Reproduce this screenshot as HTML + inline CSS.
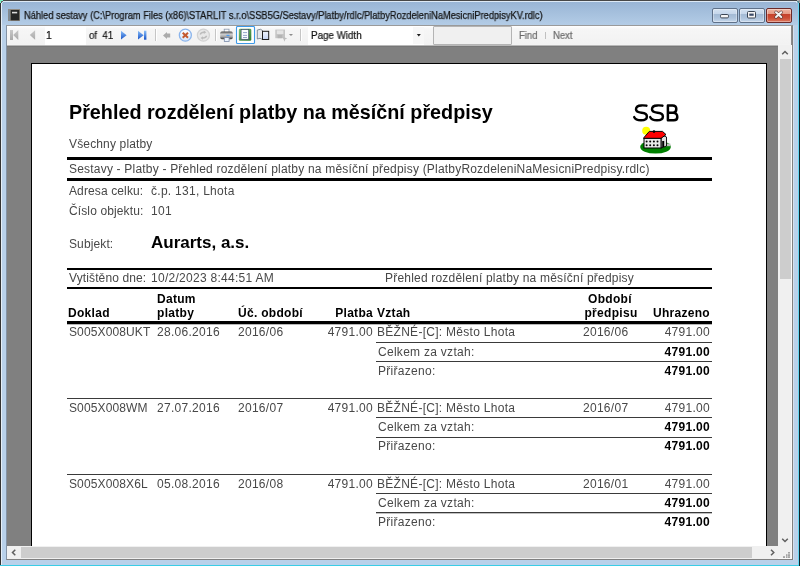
<!DOCTYPE html>
<html><head><meta charset="utf-8">
<style>
*{margin:0;padding:0;box-sizing:border-box}
html,body{width:800px;height:566px;overflow:hidden;background:#b9d1ea;font-family:"Liberation Sans",sans-serif;position:relative}
.a{position:absolute}
#title{left:2px;top:2px;width:796px;height:23px;background:linear-gradient(#99b5d5,#b3cce6)}
.ttl{left:23.5px;top:9.4px;-webkit-text-stroke:0.25px #141414;will-change:transform;font-size:10px;line-height:13px;color:#141414;white-space:pre;transform-origin:0 0;transform:scaleX(0.928)}
.wb{top:8px;width:26px;height:15px;border:1px solid #5f7189;border-radius:2px;box-shadow:inset 0 0 0 1px rgba(255,255,255,0.35);background:linear-gradient(#d4e2f1 0px,#c5d6ea 5px,#a2b9d4 5px,#adc3dc 9px,#c6d8ec 13px)}
#content{left:6px;top:25px;width:787px;height:535px;border:1px solid #808080;border-top-color:#9a9a9a;border-left-color:#8493a6;background:#808080}
#toolbar{left:7px;top:26px;width:785px;height:19px;background:linear-gradient(#ffffff 0px,#f6f6f6 3px,#f2f2f2 18px,#f4f4f4 19px)}
.tb{position:absolute;will-change:transform;-webkit-text-stroke:0.2px currentColor;font-size:10px;line-height:13px;color:#111;white-space:pre;transform-origin:0 0}
.sep{position:absolute;width:1px;height:12px;top:29px;background:#c5c5c5;box-shadow:1px 0 0 #fff}
#page{left:31px;top:63px;width:736px;height:483px;background:#fff;border:1px solid #000;border-bottom:none}
.t{position:absolute;will-change:transform;white-space:pre;font-size:12px;color:#484848;line-height:14px;letter-spacing:0.28px}
.b{font-weight:bold;color:#000;letter-spacing:0.3px}
.hl{position:absolute;background:#000}
</style></head><body>
<!-- frame edges -->
<div class="a" id="title"></div>
<div class="a" style="left:0;top:0;width:800px;height:1px;background:#474747"></div>
<div class="a" style="left:0;top:0;width:1px;height:566px;background:#333333"></div>
<div class="a" style="left:799px;top:0;width:1px;height:566px;background:#10242b"></div>
<div class="a" style="left:798px;top:1px;width:1px;height:565px;background:#66d6f2"></div>
<div class="a" style="left:0;top:565px;width:799px;height:1px;background:#3acde6"></div>
<div class="a" style="left:1px;top:1px;width:1px;height:564px;background:#e6eff8"></div>
<div class="a" style="left:1px;top:1px;width:797px;height:1px;background:#dde9f5"></div>
<div class="a" style="left:0;top:0;width:3px;height:1px;background:#78f2c8"></div>
<div class="a" style="left:0;top:0;width:1px;height:3px;background:#78f2c8"></div>
<div class="a" style="left:1px;top:1px;width:2px;height:1px;background:#6a6a6a"></div>
<div class="a" style="left:1px;top:1px;width:1px;height:2px;background:#6a6a6a"></div>
<div class="a" style="left:2px;top:2px;width:1px;height:1px;background:#d0e0f0"></div>
<div class="a" style="left:797px;top:0;width:3px;height:1px;background:#b4b4b4"></div>
<div class="a" style="left:799px;top:0;width:1px;height:3px;background:#9a9a9a"></div>
<div class="a" style="left:797px;top:1px;width:2px;height:1px;background:#5a8a90"></div>
<div class="a" style="left:798px;top:1px;width:1px;height:2px;background:#5a8a90"></div>
<div class="a" style="left:796px;top:2px;width:1px;height:1px;background:#d0e0f0"></div>

<!-- title icon -->
<svg class="a" style="left:8px;top:9px" width="12" height="12" viewBox="0 0 12 12">
<rect x="0" y="0" width="12" height="12" fill="#8f8a82"/>
<rect x="0.5" y="1" width="1.5" height="10" fill="#7a8a99"/>
<rect x="2.7" y="1" width="8.6" height="10.3" fill="#262626"/>
<rect x="4" y="2.8" width="5.2" height="1.6" fill="#dcdcdc"/>
</svg>
<div class="a ttl">Náhled sestavy (C:\Program Files (x86)\STARLIT s.r.o\SSB5G/Sestavy/Platby/rdlc/PlatbyRozdeleniNaMesicniPredpisyKV.rdlc)</div>

<!-- window buttons -->
<div class="a wb" style="left:712px"></div>
<div class="a wb" style="left:739px"></div>
<div class="a wb" style="left:766px;border-color:#6b2a2a;background:linear-gradient(#f0b4a2 0px,#e59a85 5px,#c5402a 5px,#cc4d34 9px,#dc7a62 13px)"></div>
<svg class="a" style="left:712px;top:8px" width="80" height="15" viewBox="0 0 80 15">
<rect x="8.5" y="6.5" width="8" height="3.4" rx="1.2" fill="#f4f4f4" stroke="#3c4654" stroke-width="1"/>
<rect x="35.5" y="3.5" width="8" height="6.5" rx="1" fill="#f4f4f4" stroke="#3c4654" stroke-width="1"/>
<rect x="37.3" y="5.6" width="4.4" height="2.2" fill="#3a4a68"/>
<path d="M64,4.3 L69.2,9.1 M69.2,4.3 L64,9.1" stroke="#5a3a36" stroke-width="3.4" stroke-linecap="round" opacity="0.85"/>
<path d="M64,4.3 L69.2,9.1 M69.2,4.3 L64,9.1" stroke="#f4f4f4" stroke-width="2" stroke-linecap="round"/>
</svg>

<div class="a" id="content"></div>
<div class="a" id="toolbar"></div>

<!-- toolbar content -->
<div class="a" style="left:45px;top:26px;width:41px;height:19px;background:#fff"></div>
<div class="a" style="left:308px;top:26px;width:116px;height:19px;background:#fff"></div>
<div class="a" style="left:413px;top:27px;width:11px;height:17px;background:#f7f7f7"></div>
<div class="a" style="left:433px;top:26px;width:79px;height:19px;background:#f0f0f0;border:1px solid #b4b4b4;border-radius:1px"></div>
<svg class="a" style="left:0;top:26px" width="800" height="19" viewBox="0 26 800 19">
<defs>
<linearGradient id="gg" x1="0" y1="0" x2="0" y2="1"><stop offset="0" stop-color="#c9c9c9"/><stop offset="1" stop-color="#a9a9a9"/></linearGradient>
<linearGradient id="bg" x1="0" y1="0" x2="0" y2="1"><stop offset="0" stop-color="#8cc0f8"/><stop offset="1" stop-color="#1652c8"/></linearGradient>
<linearGradient id="pg" x1="0" y1="0" x2="0" y2="1"><stop offset="0" stop-color="#c8c8c8"/><stop offset="0.5" stop-color="#9a9a9a"/><stop offset="1" stop-color="#6a6a6a"/></linearGradient>
</defs>
<!-- first -->
<rect x="10" y="30" width="3" height="10" fill="url(#gg)"/>
<polygon points="13.2,35 18.3,30 18.3,40" fill="url(#gg)"/>
<!-- prev -->
<polygon points="29.8,35 35.1,30.2 35.1,39.8" fill="url(#gg)"/>
<!-- next -->
<polygon points="121,30.7 126.6,35.2 121,39.6" fill="url(#bg)"/>
<!-- last -->
<polygon points="138,30.7 143.6,35.2 138,39.6" fill="url(#bg)"/>
<rect x="144" y="30.7" width="2.4" height="9" fill="url(#bg)"/>
<!-- back arrow -->
<polygon points="163,35.5 167,32 167,33.6 170.2,33.6 170.2,37.4 167,37.4 167,39" fill="#ababab"/>
<!-- stop -->
<defs><linearGradient id="sg" x1="0" y1="0" x2="0" y2="1"><stop offset="0" stop-color="#ffffff"/><stop offset="1" stop-color="#d6e6fa"/></linearGradient>
<linearGradient id="grg" x1="0" y1="0" x2="0" y2="1"><stop offset="0" stop-color="#4a4a4a"/><stop offset="0.35" stop-color="#cfcfcf"/><stop offset="0.65" stop-color="#a8a8a8"/><stop offset="1" stop-color="#3a3a3a"/></linearGradient>
<linearGradient id="grn" x1="0" y1="0" x2="1" y2="1"><stop offset="0" stop-color="#7cc070"/><stop offset="1" stop-color="#2f7a30"/></linearGradient>
<linearGradient id="bk" x1="0" y1="0" x2="0" y2="1"><stop offset="0" stop-color="#f0f4fc"/><stop offset="1" stop-color="#c4d4f4"/></linearGradient></defs>
<circle cx="185.35" cy="35.15" r="6.0" fill="url(#sg)" stroke="#8ab4ec" stroke-width="1.3"/>
<path d="M182.7,32.7 L188,37.7 M188,32.7 L182.7,37.7" stroke="#c4592e" stroke-width="2"/>
<!-- refresh -->
<circle cx="203.4" cy="35.15" r="6.0" fill="#e8e8e8" stroke="#d2d2d2" stroke-width="1.3"/>
<path d="M200.2,34.5 Q201,32 204.5,32.3 M206.6,35.8 Q205.8,38.3 202.3,38" stroke="#bcbcbc" stroke-width="1.4" fill="none"/>
<polygon points="203.8,30.6 206.3,32.3 203.8,34" fill="#bcbcbc"/>
<polygon points="203,36.3 200.5,38 203,39.7" fill="#bcbcbc"/>
<!-- printer -->
<rect x="224.2" y="29.2" width="4.8" height="4" fill="#fafafa" stroke="#8a9ab0" stroke-width="0.8"/>
<rect x="220.2" y="31.6" width="12.6" height="7.6" rx="1.6" fill="url(#grg)"/>
<rect x="226.5" y="34.8" width="3" height="1.3" fill="#4a9cf5"/>
<rect x="224.3" y="37.6" width="4.8" height="3.9" fill="#eaf2fc" stroke="#7a8aa8" stroke-width="0.8"/>
<!-- selected button -->
<rect x="236.5" y="26.5" width="18" height="17" rx="1" fill="#ffffff" stroke="#3d9ae8" stroke-width="1.1"/>
<rect x="238.8" y="28.8" width="12.5" height="11.9" rx="1.2" fill="url(#grn)"/>
<rect x="241.1" y="29.5" width="7.6" height="9.8" fill="#fbfcff" stroke="#3c4a68" stroke-width="0.7"/>
<path d="M243,32.6 H247 M243,35.4 H247 M243,37.5 H247" stroke="#8898c4" stroke-width="0.9"/>
<!-- book -->
<polygon points="257.3,30 260.5,29.3 262.5,30.5 262.5,39.5 260,38.3 257.3,39" fill="#e6e8ec" stroke="#6a7888" stroke-width="0.8"/>
<rect x="262.5" y="31.3" width="6.2" height="8.2" fill="url(#bk)" stroke="#1e1e1e" stroke-width="1"/>
<!-- export -->
<rect x="275.3" y="29.6" width="9.7" height="8.6" fill="#c4c4c4"/>
<rect x="276.8" y="30.4" width="6.6" height="3.6" fill="#e4e4e4"/>
<rect x="277.6" y="35" width="4.6" height="3.2" fill="#b4b4b4"/>
<polygon points="282.5,37 287.3,38.3 285.3,39.3 284.6,41.8" fill="#bdbdbd"/>
<polygon points="288.9,34 293,34 291,36.1" fill="#8c8c8c"/>
<!-- zoom dropdown arrow -->
<polygon points="416.8,34 420.8,34 418.8,36.6" fill="#1e1e1e"/>
</svg>
<div class="sep" style="left:155px"></div>
<div class="sep" style="left:215px"></div>
<div class="sep" style="left:300px"></div>
<div class="sep" style="left:545px;height:7px;top:32px;background:#c0c0c0;box-shadow:none"></div>
<div class="tb" style="left:46px;top:29px;font-size:10.5px">1</div>
<div class="tb" style="left:89px;top:29px;font-size:10.5px;transform:scaleX(0.92)">of  41</div>
<div class="tb" style="left:310.5px;top:29px;transform:scaleX(0.98)">Page Width</div>
<div class="tb" style="left:519px;top:28.5px;color:#6a6a6a;transform:scaleX(0.95)">Find</div>
<div class="tb" style="left:552.5px;top:28.5px;color:#6a6a6a;transform:scaleX(0.95)">Next</div>

<!-- gray page area -->
<div class="a" style="left:7px;top:45px;width:771px;height:1px;background:#b8b8b8"></div>
<div class="a" style="left:7px;top:46px;width:771px;height:500px;background:#808080;border-top:1px solid #767676"></div>
<div class="a" id="page"></div>

<div class="t b" style="left:69px;top:100px;font-size:19.75px;line-height:24px;letter-spacing:0">Přehled rozdělení platby na měsíční předpisy</div>
<div class="t " style="left:69px;top:137px;letter-spacing:0.15px">Všechny platby</div>
<div class="hl" style="left:67px;top:157px;width:645px;height:3px;background:#000"></div>
<div class="t " style="left:69px;top:162px;letter-spacing:0.2px">Sestavy - Platby - Přehled rozdělení platby na měsíční předpisy (PlatbyRozdeleniNaMesicniPredpisy.rdlc)</div>
<div class="hl" style="left:67px;top:178px;width:645px;height:3px;background:#000"></div>
<div class="t " style="left:69px;top:184px;letter-spacing:0.12px">Adresa celku:</div>
<div class="t " style="left:151px;top:184px;">č.p. 131, Lhota</div>
<div class="t " style="left:69px;top:204px;letter-spacing:0.12px">Číslo objektu:</div>
<div class="t " style="left:151px;top:204px;">101</div>
<div class="t " style="left:69px;top:237px;letter-spacing:0.12px">Subjekt:</div>
<div class="t b" style="left:151px;top:233px;font-size:17px;line-height:20px;letter-spacing:0">Aurarts, a.s.</div>
<div class="hl" style="left:67px;top:268px;width:645px;height:2px;background:#000"></div>
<div class="t " style="left:69px;top:271px;letter-spacing:0.12px">Vytištěno dne:</div>
<div class="t " style="left:151px;top:271px;">10/2/2023 8:44:51 AM</div>
<div class="t " style="left:385px;top:271px;letter-spacing:0.2px">Přehled rozdělení platby na měsíční předpisy</div>
<div class="hl" style="left:67px;top:287px;width:645px;height:2px;background:#000"></div>
<div class="t b" style="left:157px;top:292px;">Datum</div>
<div class="t b" style="left:510px;width:200px;text-align:center;top:292px;">Období</div>
<div class="t b" style="left:68px;top:306px;">Doklad</div>
<div class="t b" style="left:157px;top:306px;">platby</div>
<div class="t b" style="left:238px;top:306px;">Úč. období</div>
<div class="t b" style="left:173.3px;width:200px;text-align:right;top:306px;">Platba</div>
<div class="t b" style="left:377px;top:306px;">Vztah</div>
<div class="t b" style="left:511px;width:200px;text-align:center;top:306px;">předpisu</div>
<div class="t b" style="left:509.8px;width:200px;text-align:right;top:306px;">Uhrazeno</div>
<div class="hl" style="left:67px;top:321px;width:645px;height:3px;background:#000"></div>
<div class="hl" style="left:67px;top:324px;width:645px;height:1px;background:#b8b8b8"></div>
<div class="t " style="left:68.5px;top:325px;letter-spacing:0.12px">S005X008UKT</div>
<div class="t " style="left:157px;top:325px;">28.06.2016</div>
<div class="t " style="left:238px;top:325px;">2016/06</div>
<div class="t " style="left:173.3px;width:200px;text-align:right;top:325px;">4791.00</div>
<div class="t " style="left:376.8px;top:325px;">BĚŽNÉ-[C]: Město Lhota</div>
<div class="t " style="left:582.8px;top:325px;">2016/06</div>
<div class="t " style="left:509.8px;width:200px;text-align:right;top:325px;">4791.00</div>
<div class="hl" style="left:376px;top:342px;width:336px;height:1px;background:#3a3a3a"></div>
<div class="t " style="left:378px;top:345px;">Celkem za vztah:</div>
<div class="t b" style="left:509.8px;width:200px;text-align:right;top:345px;">4791.00</div>
<div class="hl" style="left:376px;top:361px;width:336px;height:1px;background:#3a3a3a"></div>
<div class="t " style="left:378px;top:364px;">Přiřazeno:</div>
<div class="t b" style="left:509.8px;width:200px;text-align:right;top:364px;">4791.00</div>
<div class="hl" style="left:67px;top:398px;width:645px;height:1px;background:#3a3a3a"></div>
<div class="t " style="left:68.5px;top:401px;letter-spacing:0.12px">S005X008WM</div>
<div class="t " style="left:157px;top:401px;">27.07.2016</div>
<div class="t " style="left:238px;top:401px;">2016/07</div>
<div class="t " style="left:173.3px;width:200px;text-align:right;top:401px;">4791.00</div>
<div class="t " style="left:376.8px;top:401px;">BĚŽNÉ-[C]: Město Lhota</div>
<div class="t " style="left:582.8px;top:401px;">2016/07</div>
<div class="t " style="left:509.8px;width:200px;text-align:right;top:401px;">4791.00</div>
<div class="hl" style="left:376px;top:417px;width:336px;height:1px;background:#3a3a3a"></div>
<div class="t " style="left:378px;top:420px;">Celkem za vztah:</div>
<div class="t b" style="left:509.8px;width:200px;text-align:right;top:420px;">4791.00</div>
<div class="hl" style="left:376px;top:437px;width:336px;height:1px;background:#3a3a3a"></div>
<div class="t " style="left:378px;top:439px;">Přiřazeno:</div>
<div class="t b" style="left:509.8px;width:200px;text-align:right;top:439px;">4791.00</div>
<div class="hl" style="left:67px;top:474px;width:645px;height:1px;background:#3a3a3a"></div>
<div class="t " style="left:68.5px;top:477px;letter-spacing:0.12px">S005X008X6L</div>
<div class="t " style="left:157px;top:477px;">05.08.2016</div>
<div class="t " style="left:238px;top:477px;">2016/08</div>
<div class="t " style="left:173.3px;width:200px;text-align:right;top:477px;">4791.00</div>
<div class="t " style="left:376.8px;top:477px;">BĚŽNÉ-[C]: Město Lhota</div>
<div class="t " style="left:582.8px;top:477px;">2016/01</div>
<div class="t " style="left:509.8px;width:200px;text-align:right;top:477px;">4791.00</div>
<div class="hl" style="left:376px;top:493px;width:336px;height:1px;background:#3a3a3a"></div>
<div class="t " style="left:378px;top:496px;">Celkem za vztah:</div>
<div class="t b" style="left:509.8px;width:200px;text-align:right;top:496px;">4791.00</div>
<div class="hl" style="left:376px;top:512px;width:336px;height:1px;background:#3a3a3a"></div>
<div class="t " style="left:378px;top:515px;">Přiřazeno:</div>
<div class="t b" style="left:509.8px;width:200px;text-align:right;top:515px;">4791.00</div>
<div class="hl" style="left:376px;top:513px;width:336px;height:1px;background:#c0c0c0"></div>
<svg class="a" style="left:630px;top:100px" width="52" height="26" viewBox="0 0 52 26">
<g fill="none" stroke="#000" stroke-width="2.45" stroke-linecap="round" stroke-linejoin="round">
<path d="M16.4,5.7 C15.3,5.3 13.5,5.4 11.2,5.4 C7.8,5.4 6,7.2 6,9.3 C6,11.8 8.6,12.4 11.6,12.7 C15,13 16.9,14.2 16.9,16.4 C16.9,19 14.6,20.3 11,20.3 C7.6,20.3 5.2,19.5 4.2,17.1"/>
<path d="M32.4,5.7 C31.3,5.3 29.5,5.4 27.2,5.4 C23.8,5.4 22,7.2 22,9.3 C22,11.8 24.6,12.4 27.6,12.7 C31,13 32.9,14.2 32.9,16.4 C32.9,19 30.6,20.3 27,20.3 C23.6,20.3 21.2,19.5 20.2,17.1"/>
<path d="M37.9,5.4 L37.9,20.3 L43.8,20.3 C46.6,20.3 47.3,18.6 47.3,16.9 C47.3,14.6 45.6,12.8 43.2,12.8 L37.9,12.8 M43.2,12.8 C45.1,12.8 46.3,11.1 46.3,9.1 C46.3,6.9 45.1,5.4 42.6,5.4 L37.9,5.4" stroke-width="2.5"/>
</g></svg>
<svg class="a" style="left:636px;top:124px" width="40" height="32" viewBox="0 0 40 32">
<ellipse cx="19.5" cy="23" rx="15.3" ry="6.6" fill="#008000"/>
<circle cx="10.2" cy="6.8" r="4" fill="#ffff00"/>
<rect x="27.5" y="19.6" width="7" height="2.6" fill="#c0c0c0"/>
<polygon points="25,10.5 30.5,13 30.5,22 25,24" fill="#e0e0e0" stroke="#000" stroke-width="0.9"/>
<rect x="26.2" y="17" width="2" height="6" fill="#000"/>
<polygon points="8,13.5 13.3,7.4 26.5,7.4 30,10.6 25,14.4 7.6,14.4" fill="#ff0000" stroke="#000" stroke-width="1"/>
<circle cx="18" cy="7.6" r="1.3" fill="#000"/>
<rect x="8" y="14.4" width="17" height="9.6" fill="#e8e8e8" stroke="#000" stroke-width="1"/>
<g fill="#000">
<circle cx="10.6" cy="17.4" r="1"/><circle cx="14.2" cy="17.4" r="1"/><circle cx="17.9" cy="17.4" r="1"/><circle cx="21.5" cy="17.4" r="1"/>
<circle cx="10.6" cy="21.2" r="1"/><circle cx="14.2" cy="21.2" r="1"/><circle cx="17.9" cy="21.2" r="1"/><circle cx="21.5" cy="21.2" r="1"/>
</g>
</svg>


<!-- vertical scrollbar -->
<div class="a" style="left:778px;top:45px;width:14px;height:514px;background:#f0f0f0"></div>
<div class="a" style="left:780px;top:59px;width:11px;height:220px;background:#cdcdcd"></div>
<svg class="a" style="left:778px;top:46px" width="14" height="513" viewBox="0 0 14 513">
<path d="M4.2,8.3 L7,5.5 L9.8,8.3" stroke="#606060" stroke-width="1.5" fill="none"/>
<path d="M4.2,492.7 L7,495.5 L9.8,492.7" stroke="#606060" stroke-width="1.5" fill="none"/>
<g fill="#a4a4a4"><rect x="10" y="506" width="2" height="1.6"/><rect x="10" y="508.2" width="2" height="1.8"/><rect x="8" y="508.2" width="1.5" height="1.8"/><rect x="10" y="510.2" width="2" height="1.8"/><rect x="8" y="510.2" width="1.5" height="1.8"/><rect x="5" y="510.2" width="2" height="1.8"/></g>
</svg>
<!-- horizontal scrollbar -->
<div class="a" style="left:791px;top:45px;width:1px;height:514px;background:#fafafa"></div>
<div class="a" style="left:791px;top:26px;width:1px;height:19px;background:#8a8a8a"></div>
<div class="a" style="left:793px;top:26px;width:1px;height:534px;background:#d4e0ee"></div>
<div class="a" style="left:7px;top:558px;width:785px;height:1px;background:#fafafa"></div>
<div class="a" style="left:7px;top:546px;width:771px;height:13px;background:#f0f0f0"></div>
<div class="a" style="left:21px;top:547px;width:731px;height:11px;background:#cdcdcd"></div>
<svg class="a" style="left:7px;top:546px" width="771" height="13" viewBox="0 0 771 13">
<path d="M8.3,3.7 L5.5,6.5 L8.3,9.3" stroke="#606060" stroke-width="1.5" fill="none"/>
<path d="M764,3.7 L766.8,6.5 L764,9.3" stroke="#606060" stroke-width="1.5" fill="none"/>
</svg>
</body></html>
